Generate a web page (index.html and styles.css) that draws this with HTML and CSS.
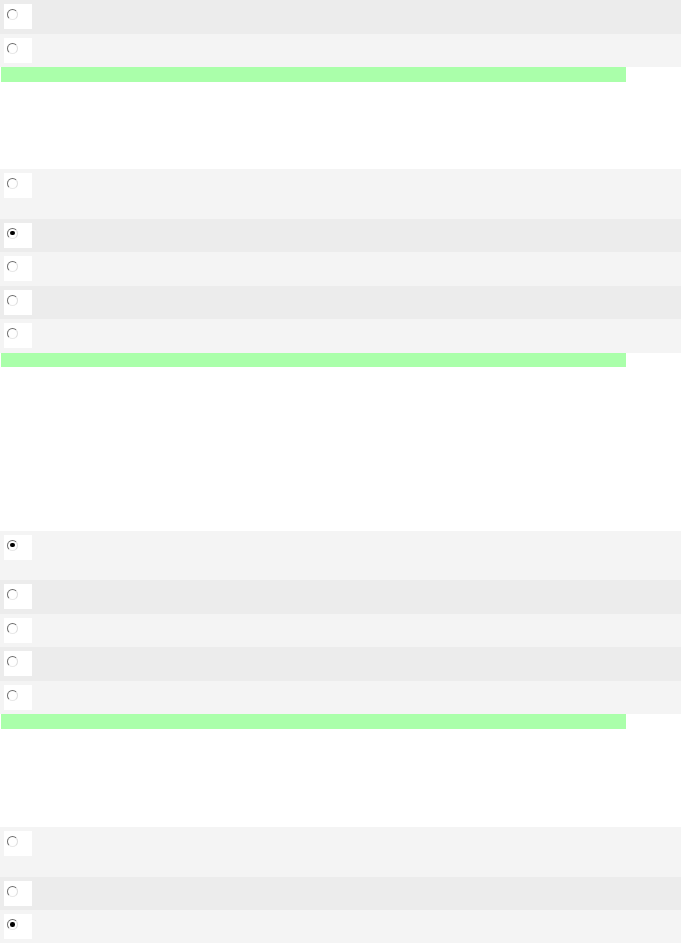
FILE: index.html
```html
<!DOCTYPE html>
<html lang="en">
<head>
    <meta charset="UTF-8">
    <title>Quiz</title>
    <link rel="stylesheet" href="styles.css">
</head>
<body>

<div class="question q-tail">
    <div class="opt alt"><span class="box"><span class="radio"></span></span></div>
    <div class="opt"><span class="box"><span class="radio"></span></span></div>
    <div class="bar"></div>
</div>

<div class="question q2">
    <div class="opt first"><span class="box"><span class="radio"></span></span></div>
    <div class="opt alt"><span class="box"><span class="radio checked"></span></span></div>
    <div class="opt"><span class="box"><span class="radio"></span></span></div>
    <div class="opt alt"><span class="box"><span class="radio"></span></span></div>
    <div class="opt"><span class="box"><span class="radio"></span></span></div>
    <div class="bar"></div>
</div>

<div class="question q3">
    <div class="opt first"><span class="box"><span class="radio checked"></span></span></div>
    <div class="opt alt"><span class="box"><span class="radio"></span></span></div>
    <div class="opt"><span class="box"><span class="radio"></span></span></div>
    <div class="opt alt"><span class="box"><span class="radio"></span></span></div>
    <div class="opt"><span class="box"><span class="radio"></span></span></div>
    <div class="bar"></div>
</div>

<div class="question q4">
    <div class="opt first"><span class="box"><span class="radio"></span></span></div>
    <div class="opt alt"><span class="box"><span class="radio"></span></span></div>
    <div class="opt"><span class="box"><span class="radio checked"></span></span></div>
</div>

</body>
</html>
```

FILE: styles.css
```css
body {
    font-family: "Liberation Sans", Arial, sans-serif;
    background: white;
    margin: 0;
    padding: 0;
}

.question {
    display: flex;
    flex-direction: column;
}

.q2 {
    margin-top: 87.5px;
}

.q3 {
    margin-top: 163.5px;
}

.q4 {
    margin-top: 98.5px;
}

.opt {
    height: 33.5px;
    box-sizing: border-box;
    padding: 4px 4px 0 4px;
    background-color: #f4f4f4;
}

.opt.alt {
    background-color: #ececec;
}

.opt.first {
    height: 49.5px;
}

.box {
    display: block;
    width: 28px;
    height: 25px;
    box-sizing: border-box;
    padding: 5px 0 0 3px;
    background-color: #ffffff;
}

.radio {
    display: flex;
    align-items: center;
    justify-content: center;
    width: 11px;
    height: 11px;
    box-sizing: border-box;
    border-radius: 50%;
    border: 1.5px solid;
    border-color: #6a6a6a #dcdcdc #e8e8e8 #707070;
    background: #ffffff;
}

.radio.checked::after {
    content: "";
    width: 4.5px;
    height: 4.5px;
    border-radius: 50%;
    background: #000000;
}

.bar {
    height: 14.5px;
    width: 625px;
    margin-left: 1px;
    background-color: #aaffaa;
}
```
